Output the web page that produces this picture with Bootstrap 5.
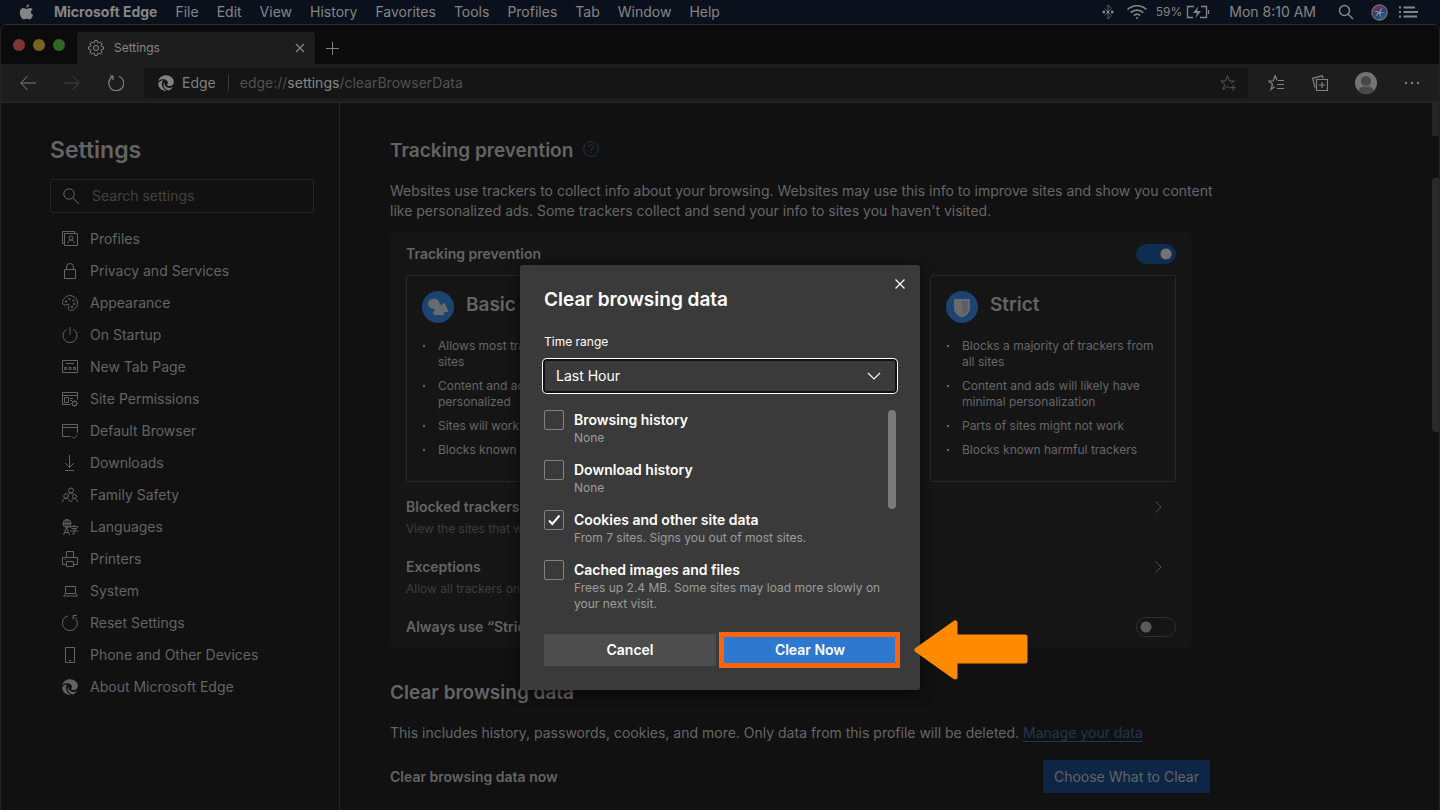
<!DOCTYPE html>
<html lang="en">
<head>
<meta charset="utf-8">
<meta name="viewport" content="width=device-width, initial-scale=1">
<title>Settings</title>
<link href="https://cdn.jsdelivr.net/npm/bootstrap@5.3.0/dist/css/bootstrap.min.css" rel="stylesheet">
<style>
body{background:#0a0a0a;color:#666;font-family:Inter,"Liberation Sans",sans-serif;font-size:14px;line-height:20px}
button{font:inherit;color:inherit;background:none;border:0;padding:0}
svg{display:block;flex:none}
.ic{width:16px;height:16px;fill:none;stroke:currentColor;stroke-width:1}

.menubar{height:24px;background:#0b111c;color:#858585;padding:0 22px 0 19px}
.menubar .app-menus{gap:18px;margin-left:20px}
.menubar a{color:inherit;text-decoration:none}
.bluetooth{margin-right:12px}
.battery-text{font-size:12px}
.clock{margin:0 22px 0 19px}
.siri{margin-left:17px}
.menu-list{margin-left:11px}

.window{border:1px solid #232323;border-top-color:#2c2c2c;border-bottom:0;border-radius:6px 6px 0 0}
.tabstrip{height:39px;background:#0b0b0b;padding-left:12px}
.light{width:12px;height:12px;border-radius:50%}
.lights{gap:8px;margin-bottom:13px}
.light-red{background:#7d3632}
.light-yellow{background:#79611f}
.light-green{background:#2d6925}
.page-tab{width:238px;height:32px;margin-left:12px;padding:0 7px 0 11px;gap:10px;background:#1d1d1d;border-radius:3px 3px 0 0;color:#868686;font-size:12px}
.new-tab{margin:0 0 8px 10px;color:#808080}
.toolbar{height:38px;background:#1d1d1d;color:#808080;padding:0 19px}
.toolbar-nav{gap:28px}
.address{height:30px;background:#151515;border-radius:3px;margin:0 20px;padding:0 12px 0 14px}
.url{color:#505050}
.url b{color:#868686;font-weight:400}
.sep{width:1px;height:16px;background:#3a3a3a;margin:0 11px 0 12px}
.dim{color:#444}
.add-star{color:#555}
.tb-gap{margin-left:28px}
.avatar-gap,.dots-gap{margin-left:27px}

.viewport-area{background:#111;border-top:1px solid #2a2a2a}
.sidebar{width:339px;border-right:1px solid #242424;padding:31px 25px 0 49px}
h1{font-size:23px;line-height:32px;font-weight:600;margin:0 0 13px;color:#646464}
h2{font-size:19px;line-height:24px;font-weight:600;margin:0;color:#646464}
h3{font-size:14px;line-height:22px;font-weight:600;margin:0;color:#646464}
.searchbox{height:34px;border:1px solid #252525;border-radius:2px;padding:0 12px;gap:13px}
.searchbox input{background:none;border:0;outline:0;color:#6e6e6e;padding:0;min-width:0}
.searchbox input::placeholder{color:#414141;opacity:1}
.side-links{margin-top:10px}
.side-links a{height:32px;padding-left:12px;gap:12px;color:#636363;text-decoration:none}

.content{padding:36px 50px 0}
.help{margin:0 0 4px 2px;color:#223347}
.intro{margin:18px 0 0;max-width:830px}
.panel{max-width:802px;background:#151515;border-radius:4px;padding:12px 16px 2px;margin-top:11px}
.panel-head{margin-bottom:11px;height:20px}
.level{border:1px solid #282828;border-radius:2px;padding:15px 15px 23px}
.level h4{font-size:19px;line-height:24px;font-weight:600;margin:0 0 4px;color:#646464}
.level ul{list-style:none;padding:0;margin:15px 0 0;font-size:12px;line-height:16px}
.level li{display:flex;gap:13px;margin-bottom:8px}
.level li:last-child{margin-bottom:0}
.level li::before{content:"";flex:none;width:2px;height:2px;background:#666;margin:7px 0 0 1px}
.entries{margin-top:6px}
.entry{height:60px;padding:8px 10px 8px 0}
.entry p{font-size:12px;line-height:22px;margin:0;color:#3e3e3e}
.chev{margin-top:3px;color:#505050}
.always{height:38px}
.toggle{appearance:none;width:40px;height:20px;margin:0;border-radius:10px;border:1px solid #303030;background:radial-gradient(circle at 9px 9px,#5a5a5a 5px,transparent 6px)}
.toggle:checked{border-color:#0e2d50;background:radial-gradient(circle at 29px 9px,#737373 5px,#0e2d50 6px)}
.clearing{max-width:820px;margin-top:33px}
.clearing a{color:#203750;text-decoration:none;border-bottom:1px solid #203750}
.note{margin:18px 0 17px}
.choose{height:33px;padding:0 11px;background:#0d2645;color:#646464}
.scroll-cap,.scroll-thumb{position:absolute;right:0;width:7px;background:#262626}
.scroll-cap{top:0;height:33px}
.scroll-thumb{top:75px;height:254px;border-radius:4px 0 0 4px;background:#2a2a2a}

.overlay{position:absolute;inset:0;padding-top:162px}
.clear-dialog{position:relative;width:400px;background:#3a3a3a;border-radius:3px;padding:24px;color:#fff;box-shadow:0 2px 14px #000a}
.clear-dialog h2{color:#fff;line-height:22px}
.dismiss{position:absolute;top:11px;right:12px}
.caption-label{font-size:12px;line-height:16px;margin:23px 0 10px}
.range{appearance:none;height:32px;border:1px solid #111;border-radius:3px;box-shadow:0 0 0 1px #111,0 0 0 2px #fff;background:#3a3a3a;color:#fff;padding:0 11px;font-size:14px}
.range-arrow{position:absolute;right:14px;top:8px;pointer-events:none}
.data-kinds{margin-top:18px;padding-right:14px;position:relative}
.data-kinds .thumb{position:absolute;right:0;top:0;width:8px;height:99px;border-radius:4px;background:#7b7b7b}
.kind{gap:10px;height:46px;margin-bottom:4px}
.kind:last-child{height:52px;margin-bottom:0}
.kind input{appearance:none;flex:none;width:20px;height:20px;margin:0;border:1px solid #828282;border-radius:2px}
.kind input:checked{background:url("data:image/svg+xml,%3Csvg xmlns='http://www.w3.org/2000/svg' viewBox='0 0 18 18'%3E%3Cpath d='M4 9.5l3.3 3.5L14.5 4.5' fill='none' stroke='white' stroke-width='2'/%3E%3C/svg%3E")}
.kind strong{display:block;font-weight:600}
.kind small{display:block;font-size:12px;line-height:16px;color:#9c9c9c}
.actions{margin-top:22px;gap:8px}
.actions button{width:100%;height:32px;font-weight:600;background:#4d4d4d}
.actions .go{background:#2f78d0}
.ring{position:absolute;inset:-2px -4px -2px -5px;border:5px solid #fb640a;pointer-events:none}
.pointer{position:absolute;left:calc(100% - 6px);top:354px}
</style>
</head>
<body class="vh-100 d-flex flex-column overflow-hidden">
<svg width="0" height="0" class="position-absolute">
  <symbol id="edge" viewBox="0 0 16 16"><path fill="currentColor" stroke="none" d="M.3 6.2C1.2 2.500 4.300.2 8 .2c4.400 0 7.800 3 7.800 6.700 0 2.400-1.800 4.100-4.100 4.100-1.700 0-2.900-.7-2.500-1.300.9-1.200.8-3-.3-4.100C7 3.700 2.600 3.700.3 6.200zM.2 8.400C1.200 6.200 3.200 5.200 5.300 5.400 3.600 7 3.400 9.700 4.600 12c.9 1.700 2.300 3 4.200 3.700C4 16.200.2 12.700.2 8.400zM6.600 7.200c-.9 2.900 1.300 5.700 4.500 5.700 1.300 0 2.600-.3 3.700-1-1 1.900-2.400 3.100-3.900 3.500C6.500 14.500 4 10.300 6.600 7.200z"/></symbol>
</svg>

<header class="menubar d-flex align-items-center flex-shrink-0">
  <svg width="15" height="16" viewBox="0 0 15 16" fill="currentColor"><path d="M10.200.2c.1 1.700-1.300 3.300-3 3.400C7 2 8.500.4 10.200.2zM13.600 5.500c-2.300 1.400-1.900 4.500.5 5.500-.7 2-2.100 4.400-3.500 4.400-1.100 0-1.500-.7-2.800-.7s-1.800.7-2.800.7C3 15.400.8 11.800.8 8.700c0-2.900 1.800-4.600 3.700-4.600 1.300 0 2.300.8 3.100.8.8 0 2-.9 3.500-.9 1 0 1.900.5 2.500 1.500z"/></svg>
  <nav class="app-menus d-flex">
    <a href="#" class="fw-bold">Microsoft Edge</a><a href="#">File</a><a href="#">Edit</a><a href="#">View</a><a href="#">History</a><a href="#">Favorites</a><a href="#">Tools</a><a href="#">Profiles</a><a href="#">Tab</a><a href="#">Window</a><a href="#">Help</a>
  </nav>
  <div class="d-flex align-items-center ms-auto">
    <svg class="bluetooth" width="12" height="16" viewBox="0 0 12 16" fill="none" stroke="#5c5c5c"><path d="M2.500 4.500l7 7L6 15V1l3.500 3.500-7 7"/><path d="M.5 8h2.500M4.800 8h2.400M9 8h2.500" stroke="#8a8a8a" stroke-width="2.400"/></svg>
    <svg class="me-2" width="22" height="16" viewBox="0 0 22 16" fill="none" stroke="currentColor" stroke-width="1.700"><path d="M1.500 5.500c5.400-5 13.600-5 19 0M4.700 8.600c3.600-3.400 9-3.400 12.600 0M7.900 11.600c1.800-1.700 4.400-1.700 6.200 0"/><circle cx="11" cy="14" r="1" fill="currentColor" stroke="none"/></svg>
    <span class="battery-text me-1">59%</span>
    <svg width="24" height="14" viewBox="0 0 24 14" fill="none" stroke="currentColor"><path d="M8 1.500H1.500v11H7M15 1.500h5.500v11H14M22.500 5v4" stroke-width="1.300"/><path d="M12.500 1L7 8h4l-1.500 5L15 6h-4z" fill="currentColor" stroke="none"/></svg>
    <span class="clock">Mon 8:10 AM</span>
    <svg width="16" height="16" viewBox="0 0 16 16" fill="none" stroke="currentColor" stroke-width="1.500"><circle cx="6.500" cy="6.500" r="5"/><path d="M10.200 10.200L15 15"/></svg>
    <svg class="siri" width="17" height="17" viewBox="0 0 17 17"><defs><linearGradient id="sg" x1="0" y1="0" x2=".6" y2="1"><stop offset="0" stop-color="#3a2f66"/><stop offset=".25" stop-color="#74345c"/><stop offset=".6" stop-color="#2b3c70"/><stop offset="1" stop-color="#2a6276"/></linearGradient></defs><circle cx="8.500" cy="8.500" r="7.700" fill="url(#sg)" stroke="#858585"/><path d="M2.500 8c2.500-1.500 4-1 5.500 0C9 6 9.600 4.500 12 3.500 10.400 5.500 10 7 9.600 8c2-.3 3.300.2 4.800 1.800-2-.9-3.300-1-4.700-.9.200 1.700.2 3-.7 4.900-.1-2-.3-3.300-.8-4.600C6.600 10.600 5.300 11.800 4.300 13c.5-2 1.500-3.200 2.800-4.200C5.700 8 4.500 7.600 2.500 8z" fill="#8798ae"/></svg>
    <svg class="menu-list" width="19" height="12" viewBox="0 0 19 12" stroke="currentColor" stroke-width="2"><path d="M0 1.500h2M0 6h2M0 10.500h2M4.500 1.500H16M4.500 6H19M4.500 10.500H18"/></svg>
  </div>
</header>

<div class="window d-flex flex-column flex-grow-1 overflow-hidden">
  <div class="tabstrip d-flex align-items-end flex-shrink-0">
    <div class="lights d-flex"><span class="light light-red"></span><span class="light light-yellow"></span><span class="light light-green"></span></div>
    <div class="page-tab d-flex align-items-center">
      <svg class="ic" viewBox="0 0 16 16"><path d="M6.800.6h2.400l.4 1.900 1.200.5 1.700-1.100 1.600 1.600L13 5.200l.5 1.200 1.900.4v2.400l-1.900.4-.5 1.200 1.100 1.700-1.600 1.600-1.700-1.100-1.200.5-.4 1.900H6.800l-.4-1.900-1.200-.5-1.700 1.100-1.600-1.600L3 10.800l-.5-1.200-1.900-.4V6.800l1.900-.4L3 5.200 1.900 3.500l1.600-1.600L5.200 3l1.200-.5z"/><circle cx="8" cy="8" r="2.500"/></svg>
      <span>Settings</span>
      <button class="ms-auto" aria-label="Close tab"><svg class="ic" viewBox="0 0 16 16"><path d="M4 4l8 8M12 4l-8 8" stroke-width="1.300"/></svg></button>
    </div>
    <button class="new-tab" aria-label="New tab"><svg class="ic" viewBox="0 0 16 16"><path d="M7.500 2v13M1 8.500h13"/></svg></button>
  </div>

  <div class="toolbar d-flex align-items-center flex-shrink-0">
    <div class="toolbar-nav d-flex">
      <button aria-label="Back"><svg class="ic" viewBox="0 0 16 16"><path d="M7.500 1L.8 8l6.700 7M1 8h15"/></svg></button>
      <button class="dim" aria-label="Forward"><svg class="ic" viewBox="0 0 16 16"><path d="M8.500 1l6.700 7-6.700 7M15 8H0"/></svg></button>
      <button aria-label="Reload"><svg class="ic" viewBox="0 0 16 16"><path d="M4.500 1.700A7.500 7.500 0 1 0 11 1.200M2 1h3v4" stroke-width="1.200"/></svg></button>
    </div>
    <div class="address d-flex align-items-center flex-grow-1">
      <svg class="ic"><use href="#edge"/></svg><span class="ms-2">Edge</span><span class="sep"></span>
      <span class="url">edge://<b>settings</b>/clearBrowserData</span>
      <button class="ms-auto add-star" aria-label="Add favorite"><svg class="ic" viewBox="0 0 16 16"><path d="M10 13.300L7.500 11.300 3 14.500l1.700-5.300L.8 6h4.700l2-5.500 2 5.500h4.700L11 8.500M13 10v5.500M10.200 12.700h5.500"/></svg></button>
    </div>
    <button aria-label="Favorites"><svg class="ic" viewBox="0 0 16 16"><path d="M9.500 5.500H16M9 9.500h7M9 13.500h7M6.700 11.500L3 14.500l1.500-5.300L.6 6h4.600l2-5.500L8.800 5" stroke-width="1.200"/></svg></button>
    <button class="tb-gap" aria-label="Collections"><svg class="ic" viewBox="0 0 16 16"><path d="M4.500 4.500h11v11h-11zM10 7v6M7 10h6M3 12.500L.7 3.300 10.500.8l.6 2.500" stroke-width="1.200"/></svg></button>
    <button class="avatar-gap" aria-label="Profile"><svg width="22" height="22" viewBox="0 0 22 22"><defs><clipPath id="av"><circle cx="11" cy="11" r="11"/></clipPath></defs><circle cx="11" cy="11" r="11" fill="#747474"/><g clip-path="url(#av)" fill="#484848" stroke="#747474"><ellipse cx="11" cy="20" rx="8.500" ry="6.500"/><circle cx="11" cy="9" r="5.500"/></g></svg></button>
    <button class="dots-gap" aria-label="More"><svg class="ic" viewBox="0 0 16 16"><path d="M1 8h2M7 8h2M13 8h2" stroke-width="2"/></svg></button>
  </div>

  <div class="viewport-area position-relative d-flex flex-grow-1 overflow-hidden">
    <aside class="sidebar flex-shrink-0">
      <h1>Settings</h1>
      <div class="searchbox d-flex align-items-center">
        <svg class="ic" viewBox="0 0 16 16"><circle cx="6" cy="6" r="5.200"/><path d="M9.800 9.800L16 16"/></svg>
        <input type="search" placeholder="Search settings" aria-label="Search settings" class="flex-grow-1">
      </div>
      <nav class="side-links d-flex flex-column">
        <a href="#" class="d-flex align-items-center"><svg class="ic" viewBox="0 0 16 16"><path d="M2.500 2.500h13v12h-13zM2.500 12.500h-2V.5h12v2M6 12c0-4 6-4 6 0"/><circle cx="9" cy="7" r="2"/></svg>Profiles</a>
        <a href="#" class="d-flex align-items-center"><svg class="ic" viewBox="0 0 16 16"><path d="M2.500 6.500h11v9h-11zM4.500 6.500V4a3.500 3.500 0 0 1 7 0v2.500"/></svg>Privacy and Services</a>
        <a href="#" class="d-flex align-items-center"><svg class="ic" viewBox="0 0 16 16"><path d="M3.300 2.500C8-2 15.500 2 15.500 8c0 4-3 7.500-7 7.500-3 0-2-3.500-1.500-5 .3-1.500-1-1.500-2-1C3 10.500.5 10 .5 7.500c0-2 1.300-4 2.800-5z"/><g fill="currentColor" stroke="none"><circle cx="4" cy="6.500" r="1.100"/><circle cx="7.500" cy="4" r="1.100"/><circle cx="11.500" cy="5.500" r="1.100"/><circle cx="12" cy="9" r="1.100"/><circle cx="10" cy="12" r="1.100"/></g></svg>Appearance</a>
        <a href="#" class="d-flex align-items-center"><svg class="ic" viewBox="0 0 16 16"><path d="M4.500 2.500a7 7 0 1 0 7 0M8 0v8"/></svg>On Startup</a>
        <a href="#" class="d-flex align-items-center"><svg class="ic" viewBox="0 0 16 16"><path d="M.5 1.500h15v12H.5zM4 4.500h8M2.500 8.500h2v2h-2zM7 8.500h2v2H7zM11.500 8.500h2v2h-2z"/></svg>New Tab Page</a>
        <a href="#" class="d-flex align-items-center"><svg class="ic" viewBox="0 0 16 16"><path d="M8.500 13.500h-8v-12h15v7M.5 4.500h15M2.500 6.500h4v5h-4zM8 7.500h3M8 9.500h2"/><circle cx="12.500" cy="12.500" r="2"/><path d="M12.500 9v1.500M12.500 14.500V16M9 12.500h1.500M14.500 12.500H16M10 10l1 1M15 10l-1 1M10 15l1-1M15 15l-1-1"/></svg>Site Permissions</a>
        <a href="#" class="d-flex align-items-center"><svg class="ic" viewBox="0 0 16 16"><path d="M8.500 13.500h-8v-12h15v8M.5 4.500h15M10 13.500l2 2 4-4"/></svg>Default Browser</a>
        <a href="#" class="d-flex align-items-center"><svg class="ic" viewBox="0 0 16 16"><path d="M7.500 0v12.500M3 8l4.500 4.500L12 8M3 15.500h9"/></svg>Downloads</a>
        <a href="#" class="d-flex align-items-center"><svg class="ic" viewBox="0 0 16 16"><circle cx="9" cy="3.500" r="2.500"/><circle cx="4" cy="9" r="2.300"/><circle cx="12.500" cy="9.500" r="2"/><path d="M.5 15c0-5 7-5 7 0M9.500 15c0-4.500 6-4.500 6 0M6.500 7.200c1-1.400 3.500-1.600 5 0"/></svg>Family Safety</a>
        <a href="#" class="d-flex align-items-center"><svg class="ic" viewBox="0 0 16 16"><circle cx="5" cy="4.500" r="4"/><path d="M1 4.500h8M5 .5v8M5 .5C2 3 2 6 5 8.500M5 .5c3 2.500 3 5.500 0 8M1.500 16l3-7.500 3 7.500M2.500 13.500h4M8.500 9V7.500h7V9M12 6v1.500M9.500 9.500h5L12 11.500V15h-2M8 12h8"/></svg>Languages</a>
        <a href="#" class="d-flex align-items-center"><svg class="ic" viewBox="0 0 16 16"><path d="M4.500 6.500v-6h7v6M4.500 13.500h-4v-7h15v7h-4M4.500 10.500h7v5h-7zM2.500 8.500h1"/></svg>Printers</a>
        <a href="#" class="d-flex align-items-center"><svg class="ic" viewBox="0 0 16 16"><path d="M3.500 3.500h10v7h-10zM3.500 10.500l-2 2.500h14l-2-2.500"/></svg>System</a>
        <a href="#" class="d-flex align-items-center"><svg class="ic" viewBox="0 0 16 16"><path d="M6 .8A7.500 7.500 0 1 0 12 1.800M15 .5h-4v4"/></svg>Reset Settings</a>
        <a href="#" class="d-flex align-items-center"><svg class="ic" viewBox="0 0 16 16"><path d="M3.500.5h9v15h-9zM7 13.500h2"/></svg>Phone and Other Devices</a>
        <a href="#" class="d-flex align-items-center"><svg class="ic"><use href="#edge"/></svg>About Microsoft Edge</a>
      </nav>
    </aside>

    <main class="content flex-grow-1">
      <section>
        <div class="d-flex align-items-center gap-2"><h2>Tracking prevention</h2><svg class="ic help" viewBox="0 0 16 16"><circle cx="8" cy="8" r="7.300"/><path d="M5.700 6c0-3 4.600-3 4.600 0 0 1.800-2.300 1.800-2.300 4M8 11v1.300"/></svg></div>
        <p class="intro">Websites use trackers to collect info about your browsing. Websites may use this info to improve sites and show you content like personalized ads. Some trackers collect and send your info to sites you haven't visited.</p>
        <div class="panel">
          <div class="panel-head d-flex justify-content-between align-items-center"><h3><label for="tp">Tracking prevention</label></h3><input id="tp" type="checkbox" class="toggle" role="switch" checked></div>
          <div class="row gx-3">
            <div class="col-4"><div class="level">
              <div class="d-flex align-items-center gap-2"><svg width="32" height="32" viewBox="0 0 32 32"><circle cx="16" cy="16" r="16" fill="#1d4470"/><path d="M9 8.500c3-1.500 6-1 7.500 1.500l1.500 3 1.500 1.500 2.500-3 2.500 4 2 5.500h-4.500v3H12l-1-2.500 2-3.500c-4 0-7-2-7-5 0-2 1-3.500 3-4.500z" fill="#686b6e"/></svg><h4 class="ms-1">Basic</h4></div>
              <ul><li>Allows most trackers across all sites</li><li>Content and ads will likely be personalized</li><li>Sites will work as expected</li><li>Blocks known harmful trackers</li></ul>
            </div></div>
            <div class="col-4 offset-4"><div class="level">
              <div class="d-flex align-items-center gap-2"><svg width="32" height="32" viewBox="0 0 32 32"><circle cx="16" cy="16" r="16" fill="#1d4470"/><path d="M8 8h16v9c0 5-4 8-8 9.500C12 25 8 22 8 17z" fill="#686b6e"/><path d="M16 10h6v7c0 4-3 6-6 7z" fill="#5b5f63"/></svg><h4 class="ms-1">Strict</h4></div>
              <ul><li>Blocks a majority of trackers from all sites</li><li>Content and ads will likely have minimal personalization</li><li>Parts of sites might not work</li><li>Blocks known harmful trackers</li></ul>
            </div></div>
          </div>
          <div class="entries">
            <div class="entry d-flex justify-content-between"><div><h3>Blocked trackers</h3><p>View the sites that we’ve blocked</p></div><svg class="ic chev" viewBox="0 0 16 16"><path d="M5.500 2.500L11 8l-5.500 5.500"/></svg></div>
            <div class="entry d-flex justify-content-between"><div><h3>Exceptions</h3><p>Allow all trackers on sites</p></div><svg class="ic chev" viewBox="0 0 16 16"><path d="M5.500 2.500L11 8l-5.500 5.500"/></svg></div>
            <div class="always d-flex justify-content-between align-items-center"><h3><label for="st">Always use “Strict”</label></h3><input id="st" type="checkbox" class="toggle" role="switch"></div>
          </div>
        </div>
      </section>
      <section class="clearing">
        <h2>Clear browsing data</h2>
        <p class="note">This includes history, passwords, cookies, and more. Only data from this profile will be deleted. <a href="#">Manage your data</a></p>
        <div class="d-flex justify-content-between align-items-center"><h3>Clear browsing data now</h3><button class="choose">Choose What to Clear</button></div>
      </section>
    </main>
    <div class="scroll-cap"></div><div class="scroll-thumb"></div>

    <div class="overlay d-flex justify-content-center align-items-start">
      <div class="clear-dialog" role="dialog" aria-labelledby="dlg">
        <button class="dismiss" aria-label="Close"><svg class="ic" viewBox="0 0 16 16"><path d="M3.500 3.500l9 9M12.500 3.500l-9 9" stroke-width="1.200"/></svg></button>
        <h2 id="dlg">Clear browsing data</h2>
        <label class="caption-label d-block" for="range">Time range</label>
        <div class="position-relative"><select id="range" class="range d-block w-100"><option>Last Hour</option></select>
          <svg class="ic range-arrow" viewBox="0 0 16 16"><path d="M2 5l6 6 6-6" stroke-width="1.200"/></svg></div>
        <div class="data-kinds">
          <span class="thumb"></span>
          <div class="kind d-flex"><input type="checkbox" id="c1"><label for="c1"><strong>Browsing history</strong><small>None</small></label></div>
          <div class="kind d-flex"><input type="checkbox" id="c2"><label for="c2"><strong>Download history</strong><small>None</small></label></div>
          <div class="kind d-flex"><input type="checkbox" id="c3" checked><label for="c3"><strong>Cookies and other site data</strong><small>From 7 sites. Signs you out of most sites.</small></label></div>
          <div class="kind d-flex"><input type="checkbox" id="c4"><label for="c4"><strong>Cached images and files</strong><small>Frees up 2.4 MB. Some sites may load more slowly on your next visit.</small></label></div>
        </div>
        <div class="actions d-flex">
          <button>Cancel</button>
          <div class="position-relative w-100"><button class="go">Clear Now</button><span class="ring"></span></div>
        </div>
        <svg class="pointer" width="114" height="62" viewBox="0 0 114 62"><path d="M3 31L41 4v14h70v24H41v16z" fill="#ff8a00" stroke="#ff8a00" stroke-width="5" stroke-linejoin="round"/></svg>
      </div>
    </div>
  </div>
</div>
<script src="https://cdn.jsdelivr.net/npm/bootstrap@5.3.0/dist/js/bootstrap.bundle.min.js"></script>
</body>
</html>
